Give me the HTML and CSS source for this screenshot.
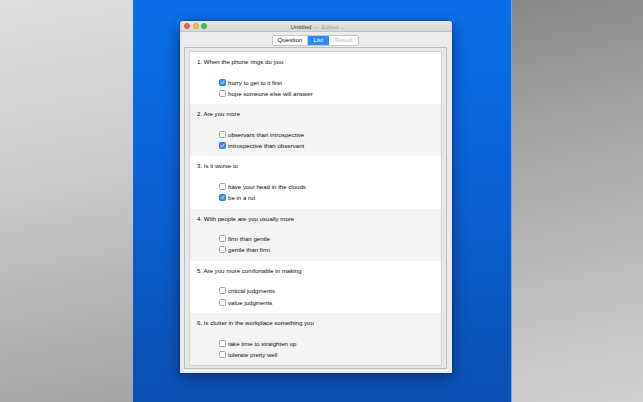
FILE: index.html
```html
<!DOCTYPE html>
<html>
<head>
<meta charset="utf-8">
<link rel="stylesheet" href="styles.css">
</head>
<body>
<div class="desk">
  <div class="panel-left"></div>
  <div class="panel-center">
    <div class="window">
      <div class="titlebar">
        <div class="lights">
          <span class="light red"></span>
          <span class="light yellow"></span>
          <span class="light green"></span>
        </div>
        <div class="title"><span class="doc">Untitled</span><span class="edited"> — Edited ⌄</span></div>
      </div>
      <div class="body">
        <div class="segmented">
          <span class="seg">Question</span>
          <span class="seg active">List</span>
          <span class="seg disabled">Result</span>
        </div>
        <div class="scroll">
          <div class="list">
            <div class="row">
              <div class="q">1. When the phone rings do you</div>
              <div class="opts">
                <div class="opt"><span class="cb on"><svg viewBox="0 0 7 7"><path d="M1.5 3.7 L2.9 5.1 L5.6 1.6"/></svg></span>hurry to get to it first</div>
                <div class="opt"><span class="cb"></span>hope someone else will answer</div>
              </div>
            </div>
            <div class="row alt">
              <div class="q">2. Are you more</div>
              <div class="opts">
                <div class="opt"><span class="cb"></span>observant than introspective</div>
                <div class="opt"><span class="cb on"><svg viewBox="0 0 7 7"><path d="M1.5 3.7 L2.9 5.1 L5.6 1.6"/></svg></span>introspective than observant</div>
              </div>
            </div>
            <div class="row">
              <div class="q">3. Is it worse to</div>
              <div class="opts">
                <div class="opt"><span class="cb"></span>have your head in the clouds</div>
                <div class="opt"><span class="cb on"><svg viewBox="0 0 7 7"><path d="M1.5 3.7 L2.9 5.1 L5.6 1.6"/></svg></span>be in a rut</div>
              </div>
            </div>
            <div class="row alt">
              <div class="q">4. With people are you usually more</div>
              <div class="opts">
                <div class="opt"><span class="cb"></span>firm than gentle</div>
                <div class="opt"><span class="cb"></span>gentle than firm</div>
              </div>
            </div>
            <div class="row">
              <div class="q">5. Are you more comfortable in making</div>
              <div class="opts">
                <div class="opt"><span class="cb"></span>critical judgments</div>
                <div class="opt"><span class="cb"></span>value judgments</div>
              </div>
            </div>
            <div class="row alt">
              <div class="q">6. Is clutter in the workplace something you</div>
              <div class="opts">
                <div class="opt"><span class="cb"></span>take time to straighten up</div>
                <div class="opt"><span class="cb"></span>tolerate pretty well</div>
              </div>
            </div>
          </div>
        </div>
      </div>
    </div>
  </div>
  <div class="panel-right"></div>
</div>
</body>
</html>
```

FILE: styles.css
```css
* { box-sizing: border-box; }
html, body { margin: 0; padding: 0; }
body {
  width: 643px;
  height: 402px;
  overflow: hidden;
  font-family: "Liberation Sans", Arial, sans-serif;
}
.desk {
  display: flex;
  width: 643px;
  height: 402px;
}
.panel-left {
  width: 133px;
  background: linear-gradient(170deg, #dedede 0%, #cdcdcd 40%, #a4a4a4 100%);
}
.panel-center {
  width: 378px;
  background: linear-gradient(to bottom, #0a6fe9 0%, #0a62d6 45%, #0b4fb1 100%);
  padding: 21px 0 0 47px;
}
.panel-right {
  width: 132px;
  border-left: 1px solid #6fa4ea;
  background: linear-gradient(168deg, #888888 0%, #a6a6a6 35%, #c2c2c2 75%, #d0d0d0 100%);
}
.window {
  width: 272px;
  height: 352px;
  background: #ececec;
  border-radius: 3px 3px 0 0;
  box-shadow: 0 4px 16px rgba(0, 0, 30, 0.45), 0 0 0 0.5px rgba(0, 0, 0, 0.25);
  display: flex;
  flex-direction: column;
}
.titlebar {
  height: 11px;
  background: linear-gradient(to bottom, #e6e6e6, #d6d6d6);
  border-bottom: 1px solid #c4c4c4;
  border-radius: 3px 3px 0 0;
  display: flex;
  align-items: center;
  position: relative;
}
.lights {
  display: flex;
  gap: 2.5px;
  padding-left: 4px;
}
.light {
  width: 6px;
  height: 6px;
  border-radius: 50%;
}
.red { background: #fc605c; border: 0.5px solid #de4a44; }
.yellow { background: #fdbc40; border: 0.5px solid #de9f34; }
.green { background: #34c84a; border: 0.5px solid #27aa35; }
.title {
  position: absolute;
  left: 0;
  right: 0;
  top: 0;
  line-height: 11px;
  text-align: center;
  font-size: 6.2px;
  padding-left: 4px;
}
.doc { color: #3a3a3a; }
.edited { color: #a4a4a4; }
.body {
  flex: 1;
  display: flex;
  flex-direction: column;
  align-items: center;
  padding: 3px 5px 4px 4px;
}
.segmented {
  display: flex;
  height: 10.5px;
  border: 1px solid #c6c6c6;
  border-radius: 2px;
  background: #fff;
  font-size: 6.2px;
  line-height: 8.5px;
  overflow: hidden;
}
.seg {
  padding: 0 5px;
  color: #111;
  border-right: 1px solid #d2d2d2;
}
.seg:last-child { border-right: 0; }
.seg.active {
  background: #2e8af8;
  color: #fff;
  padding: 0 5px;
  border-right-color: #2e8af8;
}
.seg.disabled { color: #b8b8b8; padding: 0 6px; }
.scroll {
  margin-top: 1.5px;
  align-self: stretch;
  flex: 1;
  border: 1px solid #bcbcbc;
  background: #e8e8e8;
  padding: 3px 4px 2px 4px;
  display: flex;
}
.list {
  flex: 1;
  border: 1px solid #d3d3d3;
  display: flex;
  flex-direction: column;
  background: #fff;
}
.row {
  flex: 1;
  background: #fff;
  padding: 6px 0 0 7px;
  color: #0a0a0a;
}
.row.alt { background: #f4f4f4; }
.q {
  font-size: 6.1px;
  line-height: 8px;
}
.opts {
  margin-top: 10.5px;
  padding-left: 22px;
}
.opt {
  display: flex;
  align-items: center;
  font-size: 6.1px;
  height: 11.3px;
}
.cb {
  width: 7px;
  height: 7px;
  border: 0.75px solid #a2a2a2;
  border-radius: 1.5px;
  background: #fff;
  margin-right: 2px;
  flex: none;
  display: flex;
}
.cb.on {
  background: #3b8ff6;
  border-color: #2f7ae0;
}
.cb svg {
  width: 100%;
  height: 100%;
}
.cb path {
  fill: none;
  stroke: #fff;
  stroke-width: 1.1;
  stroke-linecap: round;
  stroke-linejoin: round;
}
```
